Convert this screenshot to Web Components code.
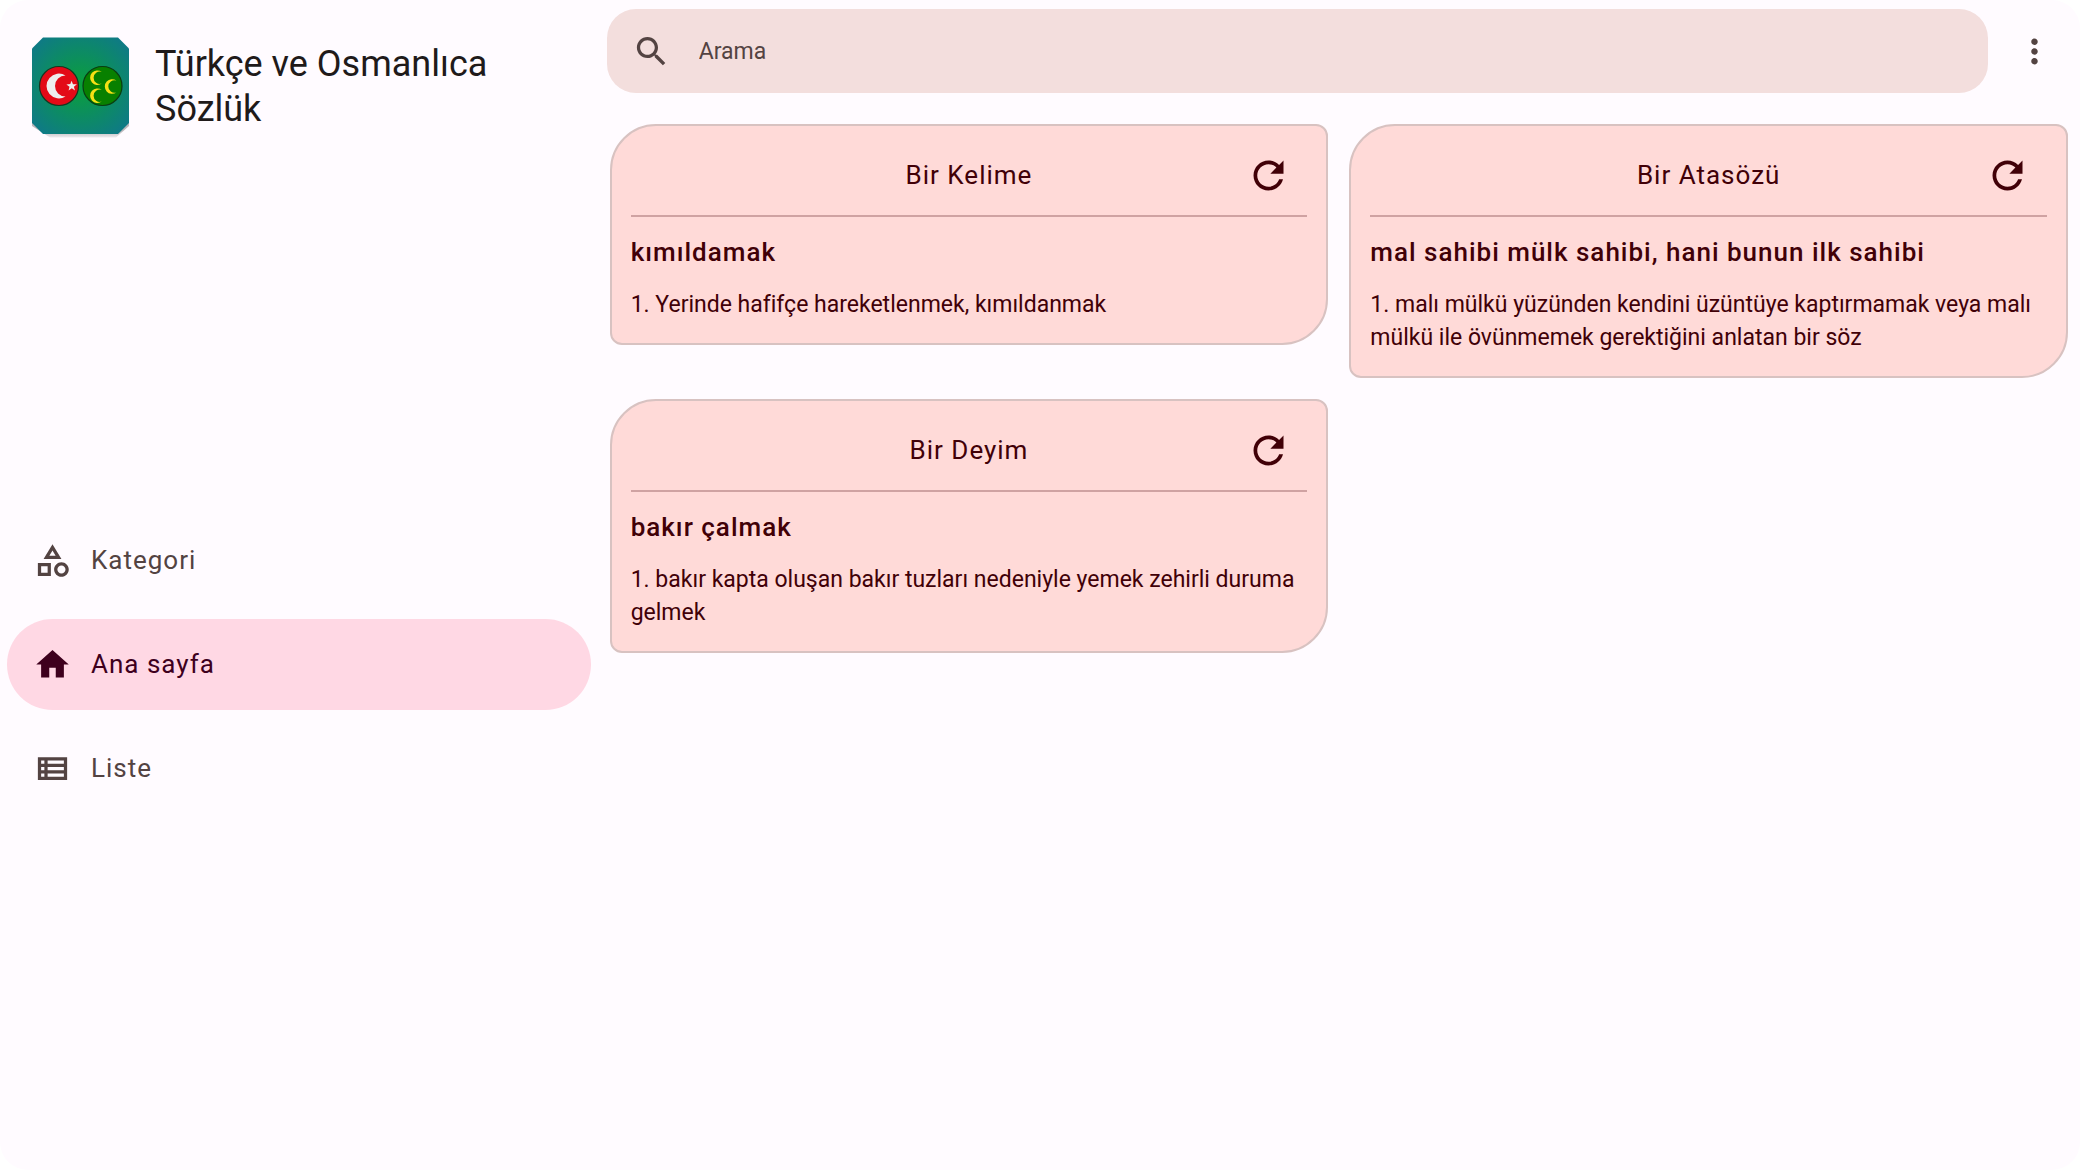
<!DOCTYPE html>
<html lang="tr">
<head>
<meta charset="utf-8">
<meta name="viewport" content="width=device-width, initial-scale=1">
<title>Türkçe ve Osmanlıca Sözlük</title>
<style>
  html { background: #fff; }
  body { margin: 0; font-family: Roboto, "Noto Sans", sans-serif; }
</style>
</head>
<body>
<dictionary-app>
  <app-brand slot="side">Türkçe ve Osmanlıca Sözlük</app-brand>
  <nav-rail slot="side">
    <nav-item icon="category">Kategori</nav-item>
    <nav-item icon="home" active>Ana sayfa</nav-item>
    <nav-item icon="list">Liste</nav-item>
  </nav-rail>
  <search-bar slot="main" placeholder="Arama"></search-bar>
  <card-grid slot="main">
    <word-card heading="Bir Kelime">
      <span slot="word">kımıldamak</span>
      1. Yerinde hafifçe hareketlenmek, kımıldanmak
    </word-card>
    <word-card heading="Bir Atasözü">
      <span slot="word">mal sahibi mülk sahibi, hani bunun ilk sahibi</span>
      1. malı mülkü yüzünden kendini üzüntüye kaptırmamak veya malı mülkü ile övünmemek gerektiğini anlatan bir söz
    </word-card>
    <word-card heading="Bir Deyim">
      <span slot="word">bakır çalmak</span>
      1. bakır kapta oluşan bakır tuzları nedeniyle yemek zehirli duruma gelmek
    </word-card>
  </card-grid>
</dictionary-app>

<script>
const ICONS = {
  category: 'M12 2l-5.5 9h11L12 2zm0 3.84L13.93 9h-3.87L12 5.84zM17.5 13c-2.49 0-4.5 2.01-4.5 4.5s2.01 4.5 4.5 4.5 4.5-2.01 4.5-4.5-2.01-4.5-4.5-4.5zm0 7c-1.38 0-2.5-1.12-2.5-2.5s1.12-2.5 2.5-2.5 2.5 1.12 2.5 2.5-1.12 2.5-2.5 2.5zM3 21.5h8v-8H3v8zm2-6h4v4H5v-4z',
  home: 'M10 20v-6h4v6h5v-8h3L12 3 2 12h3v8z',
  list: 'M3 5v14h18V5H3zm4 2v2H5V7h2zm-2 6v-2h2v2H5zm0 2h2v2H5v-2zm14 2H9v-2h10v2zm0-4H9v-2h10v2zm0-4H9V7h10v2z',
  search: 'M15.5 14h-.79l-.28-.27C15.41 12.59 16 11.11 16 9.5 16 5.91 13.09 3 9.5 3S3 5.91 3 9.5 5.91 16 9.5 16c1.61 0 3.09-.59 4.23-1.57l.27.28v.79l5 4.99L20.49 19l-4.99-5zm-6 0C7.01 14 5 11.99 5 9.5S7.01 5 9.5 5 14 7.01 14 9.5 11.99 14 9.5 14z',
  more: 'M12 8c1.1 0 2-.9 2-2s-.9-2-2-2-2 .9-2 2 .9 2 2 2zm0 2c-1.1 0-2 .9-2 2s.9 2 2 2 2-.9 2-2-.9-2-2-2zm0 6c-1.1 0-2 .9-2 2s.9 2 2 2 2-.9 2-2-.9-2-2-2z',
  refresh: 'M17.65 6.35C16.2 4.9 14.21 4 12 4c-4.42 0-7.99 3.58-7.99 8s3.57 8 7.99 8c3.73 0 6.84-2.55 7.73-6h-2.08c-.82 2.33-3.04 4-5.65 4-3.31 0-6-2.69-6-6s2.69-6 6-6c1.66 0 3.14.69 4.22 1.78L13 11h7V4l-2.35 2.35z'
};

function define(name, render) {
  customElements.define(name, class extends HTMLElement {
    connectedCallback() {
      if (this.shadowRoot) return;
      this.attachShadow({ mode: 'open' }).innerHTML = render(this);
    }
  });
}

define('md-icon', el => `
  <style>
    :host { display: block; flex: none; width: var(--icon-size, 39px); height: var(--icon-size, 39px); }
    svg { display: block; width: 100%; height: 100%; fill: currentColor; }
  </style>
  <svg viewBox="0 0 24 24" aria-hidden="true"><path d="${ICONS[el.getAttribute('name')]}"/></svg>`);

define('dictionary-app', () => `
  <style>
    :host {
      display: grid; grid-template-columns: 7fr 17fr; min-height: 100vh;
      background: #fffbff; border-radius: 28px; color: #201a1a;
    }
    aside, main { display: flex; flex-direction: column; min-width: 0; }
  </style>
  <aside><slot name="side"></slot></aside>
  <main><slot name="main"></slot></main>`);

define('app-brand', () => `
  <style>
    :host { display: flex; align-items: center; gap: 26px; padding: 37px 32px 20px; }
    svg { flex: none; display: block; width: 97px; height: 101px; }
    h1 { margin: 0; font-size: 36px; line-height: 45px; font-weight: 400; padding-bottom: 2px; }
  </style>
  <svg viewBox="0 0 97 101" aria-hidden="true">
    <defs>
      <radialGradient id="bg" gradientUnits="userSpaceOnUse" cx="48.5" cy="48.5" r="66">
        <stop offset="0" stop-color="#0aa03a"/><stop offset="1" stop-color="#0f778c"/>
      </radialGradient>
      <linearGradient id="sh" x1="0" y1="0" x2="0" y2="1">
        <stop offset=".93" stop-color="#b9b5b9"/><stop offset="1" stop-color="#eeeaee"/>
      </linearGradient>
    </defs>
    <path fill="url(#sh)" d="M11 4H86L97 15V89L84 100.500H18L0 89V15z"/>
    <path fill="url(#bg)" d="M11 .5H86L97 11.500V86L86 97H11L0 86V11.500z"/>
    <circle cx="27" cy="49" r="19.500" fill="#e30a17" stroke="#17351f" stroke-width="1.200"/>
    <path fill="#eee" d="M33.500 38.500A12.400 12.400 0 1 0 33.500 59.500A10 10 0 1 1 33.500 38.500z"/>
    <path fill="#eee" d="M39.500 43.700l1.500 3.500 3.900.1-3 2.400 1.100 3.700-3.200-2.100-3.200 2.200.9-3.800-3.100-2.300 3.900-.3z"/>
    <circle cx="70.500" cy="49" r="19.500" fill="#088000" stroke="#0a3d12" stroke-width="1.200"/>
    <g fill="#f6e015">
      <path id="moon" d="M69.700 34.800A7.300 7.300 0 1 0 69.700 46.600A6.200 6.200 0 1 1 69.700 34.800z"/>
      <use href="#moon" y="18"/>
      <use href="#moon" x="14.700" y="8.800"/>
    </g>
  </svg>
  <h1><slot></slot></h1>`);

define('nav-rail', () => `
  <style>
    :host { display: flex; flex: 1; }
    nav { flex: 1; display: flex; flex-direction: column; justify-content: center; gap: 13px; padding: 0 16px 0 7px; }
  </style>
  <nav><slot></slot></nav>`);

define('nav-item', el => `
  <style>
    :host { display: block; color: #534342; }
    :host([active]) { color: #3e001d; }
    a {
      display: flex; align-items: center; gap: 19px; height: 91px; padding: 0 26px;
      border-radius: 46px; color: inherit; text-decoration: none;
      font-size: 26px; line-height: 39px; letter-spacing: 1px;
    }
    :host([active]) a { background: #ffd8e4; }
  </style>
  <a href="#${el.getAttribute('icon')}"${el.hasAttribute('active') ? ' aria-current="page"' : ''}>
    <md-icon name="${el.getAttribute('icon')}"></md-icon><span><slot></slot></span>
  </a>`);

define('search-bar', el => `
  <style>
    :host { display: flex; align-items: center; gap: 8px; padding: 9px 6px 0 0; color: #534342; }
    label {
      flex: 1; display: flex; align-items: center; gap: 28px; height: 84px; padding: 0 25px;
      border-radius: 29px; background: #f3dedd;
    }
    input {
      flex: 1; min-width: 0; border: 0; padding: 0; background: none; outline: none;
      font: inherit; font-size: 23px; line-height: 33px; color: inherit;
    }
    input::placeholder { color: inherit; opacity: 1; }
    button {
      display: grid; place-items: center; width: 78px; height: 78px; padding: 0;
      border: 0; border-radius: 39px; background: none; color: inherit; cursor: pointer;
    }
  </style>
  <label><md-icon name="search"></md-icon><input type="text" aria-label="Arama" placeholder="${el.getAttribute('placeholder')}"></label>
  <button type="button" aria-label="Menü"><md-icon name="more"></md-icon></button>`);

define('card-grid', () => `
  <style>
    :host {
      display: grid; grid-template-columns: repeat(2, minmax(0, 1fr)); align-items: start;
      gap: 21px; padding: 31px 12px 12px 3px;
    }
  </style>
  <slot></slot>`);

define('word-card', el => `
  <style>
    :host { display: block; color: #410007; }
    article {
      padding: 10px 19px 22px; border: 2px solid #d8c2c1;
      border-radius: 46px 12px 46px 12px; background: #ffdad8;
    }
    header {
      display: grid; grid-template-columns: 1fr auto 1fr; align-items: center;
      border-bottom: 2px solid #cfa2a2;
    }
    h2, h3, p { margin: 0; }
    h2 { grid-column: 2; font-size: 26px; line-height: 39px; font-weight: 400; letter-spacing: 1px; }
    h3 { padding: 16px 0; font-size: 26px; line-height: 39px; font-weight: 500; letter-spacing: 1px; }
    p { font-size: 23px; line-height: 33px; }
    button {
      --icon-size: 45px;
      justify-self: end; display: grid; place-items: center; width: 78px; height: 79px; padding: 0;
      border: 0; border-radius: 39px; background: none; color: inherit; cursor: pointer;
    }
  </style>
  <article>
    <header>
      <h2>${el.getAttribute('heading')}</h2>
      <button type="button" aria-label="Yenile"><md-icon name="refresh"></md-icon></button>
    </header>
    <h3><slot name="word"></slot></h3>
    <p><slot></slot></p>
  </article>`);
</script>
</body>
</html>
